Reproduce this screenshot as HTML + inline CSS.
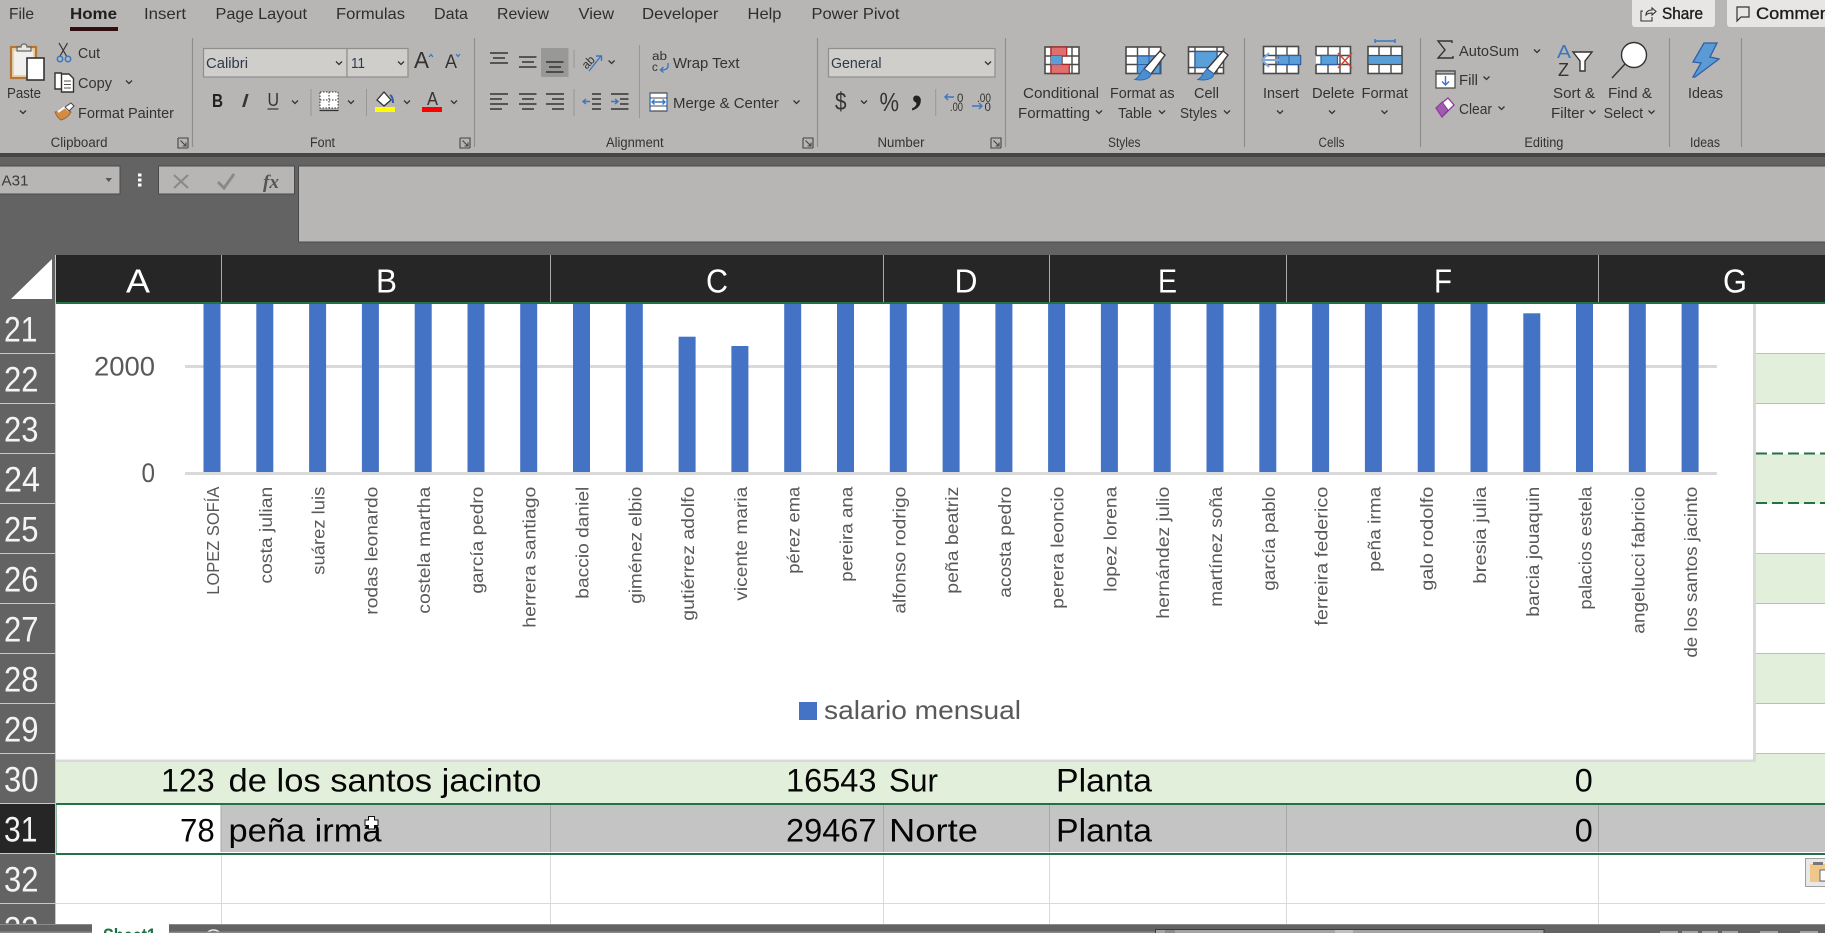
<!DOCTYPE html>
<html lang="en">
<head>
<meta charset="utf-8">
<title>Excel</title>
<style>
html,body{margin:0;padding:0;background:#636363;width:1825px;height:933px;overflow:hidden}
svg{display:block;position:absolute;left:0;top:0}
text{font-family:"Liberation Sans",sans-serif;white-space:pre}
.t{font-size:16px;fill:#2e2e2e}
.r{font-size:15px;fill:#333}
.g{font-size:13.5px;fill:#333}
.rn{font-size:35px;fill:#f4f4f4}
.cl{font-size:33px;fill:#fff;text-anchor:middle}
.d{font-size:32.5px;fill:#050505}
.x{font-size:17.5px;fill:#595959;text-anchor:end}
.y{font-size:26.5px;fill:#595959}
.ln{fill:none;stroke:#333;stroke-width:1.4}
.bl{fill:none;stroke:#3a76c4;stroke-width:1.4}
.gr{fill:#fff;stroke:#4a4a4a;stroke-width:1.6}
.gl{fill:none;stroke:#4a4a4a;stroke-width:1.4}
</style>
</head>
<body>
<svg width="1825" height="933" viewBox="0 0 1825 933" xmlns="http://www.w3.org/2000/svg">
<defs>
<path id="c" d="M-3-1.5 0 1.5 3-1.5" fill="none" stroke="#333" stroke-width="1.3"/>
<g id="lc"><path d="M0 0H10V10M0 0V10H10" fill="none" stroke="#444" stroke-width="1.1"/><path d="M2.5 2.5 8 8M8 4.5V8H4.5" fill="none" stroke="#444" stroke-width="1.1"/></g>
<g id="brush"><path d="M26-2 31 2 17 21 10 16Z" fill="#fff" stroke="#3a3a3a" stroke-width="1.4"/><path d="M10 16 17 21C16 26 9 28 1 26.500 6 24 6 19 10 16Z" fill="#4b8fd0" stroke="#2f6cb0" stroke-width="1"/></g>
<clipPath id="grid"><rect x="0" y="304" width="1825" height="620"/></clipPath>
<clipPath id="bot"><rect x="0" y="924" width="1825" height="9"/></clipPath>
</defs>

<!-- ribbon -->
<rect x="0" y="0" width="1825" height="153" fill="#b7b6b4"/>
<rect x="0" y="153" width="1825" height="4" fill="#454545"/>
<rect x="0" y="157" width="1825" height="98" fill="#636363"/>

<text class="t" x="9" y="19" textLength="25" lengthAdjust="spacingAndGlyphs">File</text>
<text class="t" x="70" y="19" textLength="47" lengthAdjust="spacingAndGlyphs" font-weight="bold" style="fill:#1f1f1f">Home</text>
<rect x="70" y="27" width="48" height="4" fill="#2f0f0f"/>
<text class="t" x="144" y="19" textLength="42" lengthAdjust="spacingAndGlyphs">Insert</text>
<text class="t" x="215.500" y="19" textLength="91.500" lengthAdjust="spacingAndGlyphs">Page Layout</text>
<text class="t" x="336" y="19" textLength="69" lengthAdjust="spacingAndGlyphs">Formulas</text>
<text class="t" x="434" y="19" textLength="34" lengthAdjust="spacingAndGlyphs">Data</text>
<text class="t" x="497" y="19" textLength="52" lengthAdjust="spacingAndGlyphs">Review</text>
<text class="t" x="578.500" y="19" textLength="35.500" lengthAdjust="spacingAndGlyphs">View</text>
<text class="t" x="642" y="19" textLength="76.500" lengthAdjust="spacingAndGlyphs">Developer</text>
<text class="t" x="747.500" y="19" textLength="34" lengthAdjust="spacingAndGlyphs">Help</text>
<text class="t" x="811.500" y="19" textLength="88" lengthAdjust="spacingAndGlyphs">Power Pivot</text>

<!-- share / comments -->
<rect x="1632" y="-4" width="83" height="31" rx="3" fill="#e7e6e4"/>
<rect x="1727" y="-4" width="110" height="31" rx="3" fill="#e7e6e4"/>
<path d="M1643 11H1641V21H1652V17M1646 15C1646 12 1648 10 1652 10V8L1656 11.500 1652 15V13C1649 13 1647 14 1646 15Z" fill="none" stroke="#333" stroke-width="1.1"/>
<text x="1662" y="19" font-size="17" fill="#1c1c1c" stroke="#1c1c1c" stroke-width=".35" textLength="41" lengthAdjust="spacingAndGlyphs">Share</text>
<path d="M1737 7H1749V17H1741L1737 21Z" fill="none" stroke="#333" stroke-width="1.2"/>
<text x="1756" y="19" font-size="17" fill="#1c1c1c" stroke="#1c1c1c" stroke-width=".35" textLength="88" lengthAdjust="spacingAndGlyphs">Comments</text>

<!-- group separators -->
<path d="M192.500 38V147M474.500 38V147M817.500 38V147M1005.500 38V147M1244.500 38V147M1420.500 38V147M1669.500 38V147M1741.500 38V147" stroke="#8f8e8c" stroke-width="1.2"/>
<path d="M311 89V116M366.500 89V116M574 50V68M574 89V116M639.500 45V118M935.700 89V116" stroke="#989795" stroke-width="1"/>

<!-- clipboard -->
<rect x="11" y="47" width="25" height="31" fill="#e9d3a8" stroke="#b4763a" stroke-width="2.200"/>
<rect x="14" y="51" width="19" height="24" fill="#f1f0ee"/>
<path d="M17 51V47H21C21 43 27 43 27 47H31V51Z" fill="#e7e6e4" stroke="#666" stroke-width="1.2"/>
<rect x="27" y="58" width="17" height="22" fill="#fff" stroke="#333" stroke-width="1.6"/>
<text class="r" x="7" y="98" textLength="34" lengthAdjust="spacingAndGlyphs">Paste</text>
<use href="#c" x="23" y="112"/>
<path d="M59 43 67 57M67.500 43 59.500 57" stroke="#333" stroke-width="1.2" fill="none"/>
<circle cx="60" cy="59" r="2.700" fill="none" stroke="#3a76c4" stroke-width="1.5"/><circle cx="68" cy="59" r="2.700" fill="none" stroke="#3a76c4" stroke-width="1.500"/>
<text class="r" x="78" y="58" textLength="22" lengthAdjust="spacingAndGlyphs">Cut</text>
<path d="M63 89H55V73H62" fill="#fff" stroke="#333" stroke-width="1.4"/>
<path d="M61.500 74H69L73.500 78.500V92H61.500Z" fill="#fff" stroke="#333" stroke-width="1.400"/>
<path d="M64 81H71M64 84.500H71M64 88H71" stroke="#555"/>
<text class="r" x="78" y="88" textLength="34" lengthAdjust="spacingAndGlyphs">Copy</text>
<use href="#c" x="129" y="82"/>
<path d="M55 112C60 112 63 110 65 107L71 112C69 116 65 119 61 120 58 118 56 115 55 112Z" fill="#d18b45" stroke="#a5642a"/>
<path d="M58 112 65 107 69 111" fill="none" stroke="#fff" stroke-width="2"/>
<path d="M65 107 71 103 74 106 69 111Z" fill="#fff" stroke="#444"/>
<text class="r" x="78" y="118" textLength="96" lengthAdjust="spacingAndGlyphs">Format Painter</text>
<text class="g" x="50.600" y="147" textLength="57" lengthAdjust="spacingAndGlyphs">Clipboard</text>
<use href="#lc" x="178" y="138"/>

<!-- font -->
<rect x="203.500" y="48.500" width="143.500" height="28.500" fill="#cfcecb" stroke="#8e8e8c" stroke-width="1.200"/>
<rect x="347" y="48.500" width="61" height="28.500" fill="#cfcecb" stroke="#8e8e8c" stroke-width="1.200"/>
<text class="r" x="206" y="68" textLength="42" lengthAdjust="spacingAndGlyphs" style="fill:#2c3a4c">Calibri</text>
<text class="r" x="351" y="68" textLength="14" lengthAdjust="spacingAndGlyphs" style="fill:#2c3a4c">11</text>
<use href="#c" x="339" y="63"/><use href="#c" x="401" y="63"/>
<text x="414" y="68" font-size="23" fill="#333" textLength="15" lengthAdjust="spacingAndGlyphs">A</text>
<path d="M429 57 431 54.500 433 57" fill="none" stroke="#3a76c4" stroke-width="1.200"/>
<text x="445" y="68" font-size="19" fill="#333" textLength="12" lengthAdjust="spacingAndGlyphs">A</text>
<path d="M456 54 458 56.500 460 54" fill="none" stroke="#3a76c4" stroke-width="1.200"/>
<text x="212" y="107" font-size="18" font-weight="bold" fill="#222" textLength="11" lengthAdjust="spacingAndGlyphs">B</text>
<text x="241" y="107" font-size="18" font-style="italic" fill="#333" textLength="8" lengthAdjust="spacingAndGlyphs">I</text>
<text x="267.500" y="106" font-size="18" fill="#333" textLength="11.500" lengthAdjust="spacingAndGlyphs">U</text>
<path d="M267.500 109H278.500" stroke="#333" stroke-width="1.200"/>
<use href="#c" x="295" y="102"/>
<rect x="320" y="92" width="18" height="16" fill="#fff" stroke="#333" stroke-width="1" stroke-dasharray="1.500 1.500"/>
<path d="M329 92V108M320 100H338" stroke="#333" stroke-width="1" stroke-dasharray="1.500 1.500"/>
<path d="M319.500 110.500H338.500" stroke="#333" stroke-width="1.300"/>
<use href="#c" x="351" y="102"/>
<path d="M377 100 384 92 391 100 384 106Z" fill="#fff" stroke="#333" stroke-width="1.300"/>
<path d="M390 95C392 96 393 99 393 103" fill="none" stroke="#2f5ea8" stroke-width="2"/>
<rect x="375" y="107" width="20" height="5" fill="#ffff00"/>
<use href="#c" x="407" y="102"/>
<text x="427" y="105" font-size="18" fill="#333" textLength="11" lengthAdjust="spacingAndGlyphs">A</text>
<rect x="422" y="107" width="20" height="5" fill="#ff0000"/>
<use href="#c" x="454" y="102"/>
<text class="g" x="310" y="147" textLength="25" lengthAdjust="spacingAndGlyphs">Font</text>
<use href="#lc" x="460" y="138"/>

<!-- alignment -->
<rect x="541" y="48" width="27.500" height="29" fill="#989896"/>
<path class="ln" d="M490 53H508M493 58H505M490 63H508M519 57H536.500M522 62H534M519 67H536.500M546 62H563.500M549 67H561M546 72H563.500"/>
<path class="ln" d="M490 94H508M490 99H502M490 104H508M490 109H502M519 94H536.500M522 99H534M519 104H536.500M522 109H534M546 94H564M552 99H564M546 104H564M552 109H564"/>
<text x="582" y="65" font-size="12" fill="#333" transform="rotate(-45 590 62)" textLength="13" lengthAdjust="spacingAndGlyphs">ab</text>
<path class="bl" d="M589 71 601 56M596 56H601.500V61"/>
<use href="#c" x="611.600" y="62"/>
<path class="ln" d="M592 94H601M592 109H601M592 99H601M592 104H601" />
<path class="bl" d="M590 101.500H583M586 99 583 101.500 586 104"/>
<path class="ln" d="M611 94H628.500M620 99H628.500M620 104H628.500M611 109H628.500"/>
<path class="bl" d="M611 101.500H618M615 99 618 101.500 615 104"/>
<text x="652" y="60" font-size="11.500" fill="#333" textLength="15" lengthAdjust="spacingAndGlyphs">ab</text>
<text x="652" y="71" font-size="11.500" fill="#333">c</text>
<path class="bl" d="M668 63V66C668 69 665 70 661 70M663.500 67 660.500 70 663.500 72.500"/>
<text class="r" x="673" y="68" textLength="66.500" lengthAdjust="spacingAndGlyphs">Wrap Text</text>
<rect x="650" y="93" width="17" height="18" fill="#fff" stroke="#4a4a4a" stroke-width="1.200"/>
<path d="M650 93V111M667 93V111" stroke="#3a76c4" stroke-width="1.200"/>
<path d="M650 98H667M650 106H667" stroke="#4a4a4a"/>
<path class="bl" d="M652 102H665M654.500 99.500 652 102 654.500 104.500M662.500 99.500 665 102 662.500 104.500"/>
<text class="r" x="673" y="108" textLength="105.700" lengthAdjust="spacingAndGlyphs">Merge &amp; Center</text>
<use href="#c" x="796.500" y="102"/>
<text class="g" x="606" y="147" textLength="57.600" lengthAdjust="spacingAndGlyphs">Alignment</text>
<use href="#lc" x="803" y="138"/>

<!-- number -->
<rect x="828.500" y="48.500" width="166.500" height="28.500" fill="#cfcecb" stroke="#8e8e8c" stroke-width="1.200"/>
<text class="r" x="831" y="68" textLength="50.500" lengthAdjust="spacingAndGlyphs" style="fill:#2c3a4c">General</text>
<use href="#c" x="988" y="63"/>
<text x="835" y="110" font-size="25" fill="#333" textLength="11.500" lengthAdjust="spacingAndGlyphs">$</text>
<use href="#c" x="864" y="102"/>
<text x="879.500" y="111" font-size="26" fill="#333" textLength="19.500" lengthAdjust="spacingAndGlyphs">%</text>
<text x="911.500" y="103" font-size="50" font-weight="bold" style="font-family:'Liberation Serif',serif" fill="#222" textLength="11" lengthAdjust="spacingAndGlyphs">,</text>
<path class="bl" d="M954 97H945M948 94 945 97 948 100"/>
<text x="957" y="102" font-size="11.500" fill="#333">0</text>
<text x="950" y="111" font-size="11.500" fill="#333" textLength="13" lengthAdjust="spacingAndGlyphs">.00</text>
<text x="977" y="102" font-size="11.500" fill="#333" textLength="14" lengthAdjust="spacingAndGlyphs">.00</text>
<path class="bl" d="M972 106H982M979 103 982 106 979 109"/>
<text x="984.500" y="111" font-size="11.500" fill="#333">0</text>
<text class="g" x="877.500" y="147" textLength="47" lengthAdjust="spacingAndGlyphs">Number</text>
<use href="#lc" x="991" y="138"/>

<!-- styles -->
<rect x="1045" y="47" width="34" height="26.500" class="gr"/>
<path class="gl" d="M1051 47V73.500M1062 47V73.500M1072 47V73.500M1045 56H1079M1045 64.500H1079"/>
<rect x="1051" y="47" width="15.700" height="9" fill="#e07070" stroke="#b22222" stroke-width="1.200"/>
<rect x="1051" y="64.500" width="18.300" height="9" fill="#e07070" stroke="#b22222" stroke-width="1.200"/>
<rect x="1051" y="56" width="10.700" height="8.500" fill="#5b9fd8"/>
<rect x="1126" y="47" width="34.700" height="26.500" class="gr"/>
<path class="gl" d="M1137.500 47V73.500M1149 47V73.500M1126 56H1160.700M1126 64.500H1160.700"/>
<rect x="1137.500" y="56" width="22.500" height="17.500" fill="#5b9fd8" stroke="#2f5ea8" stroke-width="1.200"/>
<path d="M1149 56V73.500M1137.500 64.500H1160" stroke="#2f5ea8" stroke-width="1"/>
<use href="#brush" x="1134" y="53"/>
<rect x="1188.500" y="47" width="35" height="26.500" class="gr"/>
<path class="gl" d="M1195 47V73.500M1217 47V73.500M1188.500 51.500H1223.500M1188.500 67.500H1223.500"/>
<rect x="1195" y="51.500" width="22" height="16" fill="#5b9fd8" stroke="#2f5ea8" stroke-width="1.200"/>
<use href="#brush" x="1197" y="53"/>
<text class="r" x="1023" y="98" textLength="76" lengthAdjust="spacingAndGlyphs">Conditional</text>
<text class="r" x="1018" y="118" textLength="72" lengthAdjust="spacingAndGlyphs">Formatting</text>
<use href="#c" x="1099" y="112"/>
<text class="r" x="1110" y="98" textLength="64.500" lengthAdjust="spacingAndGlyphs">Format as</text>
<text class="r" x="1118" y="118" textLength="34" lengthAdjust="spacingAndGlyphs">Table</text>
<use href="#c" x="1162" y="112"/>
<text class="r" x="1194" y="98" textLength="25" lengthAdjust="spacingAndGlyphs">Cell</text>
<text class="r" x="1180" y="118" textLength="37" lengthAdjust="spacingAndGlyphs">Styles</text>
<use href="#c" x="1227" y="112"/>
<text class="g" x="1108" y="147" textLength="32.500" lengthAdjust="spacingAndGlyphs">Styles</text>

<!-- cells -->
<rect x="1263.500" y="46.500" width="35" height="27" class="gr"/>
<path class="gl" d="M1276 46.500V73.500M1287 46.500V73.500M1263.500 55.500H1298.500M1263.500 64.500H1298.500"/>
<rect x="1278" y="55.500" width="22.700" height="9" fill="#5b9fd8" stroke="#2f5ea8" stroke-width="1.200"/>
<path d="M1289 55.500V64.500" stroke="#2f5ea8"/>
<path d="M1280 60H1263M1269 53 1262 60 1269 67" fill="none" stroke="#7fa8d8" stroke-width="2"/>
<path d="M1316 55.500V46.500H1350.500V73.500H1316V64.500" fill="#fff" stroke="#4a4a4a" stroke-width="1.600"/>
<path class="gl" d="M1328 46.500V55M1340 46.500V73.500M1328 64.500V73.500M1316 55.500H1350.500M1316 64.500H1350.500"/>
<rect x="1321" y="55.500" width="16.500" height="9" fill="#5b9fd8" stroke="#2f5ea8" stroke-width="1.200"/>
<path d="M1338 53 1352 68M1352 53 1338 68" stroke="#d8432f" stroke-width="1.500"/>
<rect x="1368" y="46.500" width="34" height="27" class="gr"/>
<path class="gl" d="M1379 46.500V73.500M1391 46.500V73.500"/>
<rect x="1368" y="55.500" width="34" height="9" fill="#5b9fd8" stroke="#4a4a4a" stroke-width="1.200"/>
<path d="M1375 41H1395M1375 39V43M1395 39V43" stroke="#3a76c4" stroke-width="1.400"/>
<text class="r" x="1263" y="98" textLength="36" lengthAdjust="spacingAndGlyphs">Insert</text>
<text class="r" x="1312" y="98" textLength="42.500" lengthAdjust="spacingAndGlyphs">Delete</text>
<text class="r" x="1361.500" y="98" textLength="46.500" lengthAdjust="spacingAndGlyphs">Format</text>
<use href="#c" x="1280" y="112"/><use href="#c" x="1332" y="112"/><use href="#c" x="1384.500" y="112"/>
<text class="g" x="1318.500" y="147" textLength="26" lengthAdjust="spacingAndGlyphs">Cells</text>

<!-- editing -->
<path d="M1452 43V41H1438L1445 50 1438 58H1453V56" fill="none" stroke="#333" stroke-width="1.400"/>
<text class="r" x="1459" y="56" textLength="60" lengthAdjust="spacingAndGlyphs">AutoSum</text>
<use href="#c" x="1537" y="51"/>
<rect x="1436" y="71" width="19" height="17" fill="#fff" stroke="#444" stroke-width="1.200"/>
<rect x="1436" y="71" width="19" height="3" fill="#b7b6b4" stroke="#444" stroke-width="1.200"/>
<path class="bl" d="M1445.500 76V85M1442 81.500 1445.500 85 1449 81.500"/>
<text class="r" x="1459" y="85" textLength="19" lengthAdjust="spacingAndGlyphs">Fill</text>
<use href="#c" x="1486.500" y="78"/>
<path d="M1436 108 1448 98 1454 105 1442 117Z" fill="#fff" stroke="#8a3a9a" stroke-width="1.300"/>
<path d="M1436 108 1442 102 1448 110 1442 117Z" fill="#a05cb0" stroke="#8a3a9a"/>
<text class="r" x="1459" y="114" textLength="33" lengthAdjust="spacingAndGlyphs">Clear</text>
<use href="#c" x="1501.500" y="108"/>
<text x="1557" y="58" font-size="18" fill="#3a76c4" textLength="14" lengthAdjust="spacingAndGlyphs">A</text>
<text x="1558" y="76" font-size="18" fill="#333" textLength="11" lengthAdjust="spacingAndGlyphs">Z</text>
<path d="M1573 52H1592L1585 61V71H1580V61Z" fill="#fff" stroke="#333" stroke-width="1.400"/>
<circle cx="1634" cy="55" r="12.500" fill="#fff" stroke="#333" stroke-width="1.400"/>
<path d="M1625 64 1612 78" stroke="#333" stroke-width="1.400"/>
<text class="r" x="1553" y="98" textLength="42" lengthAdjust="spacingAndGlyphs">Sort &amp;</text>
<text class="r" x="1551" y="118" textLength="33.600" lengthAdjust="spacingAndGlyphs">Filter</text>
<use href="#c" x="1592.500" y="112"/>
<text class="r" x="1608" y="98" textLength="44" lengthAdjust="spacingAndGlyphs">Find &amp;</text>
<text class="r" x="1603.600" y="118" textLength="39.500" lengthAdjust="spacingAndGlyphs">Select</text>
<use href="#c" x="1651.500" y="112"/>
<text class="g" x="1524.400" y="147" textLength="39" lengthAdjust="spacingAndGlyphs">Editing</text>

<!-- ideas -->
<path d="M1704 43H1717L1710 57 1719 59 1695 77H1693L1701 63 1693 62Z" fill="#5b9bd5" stroke="#2f5ea8" stroke-width="1.300"/>
<text class="r" x="1688" y="98" textLength="35" lengthAdjust="spacingAndGlyphs">Ideas</text>
<text class="g" x="1690" y="147" textLength="30" lengthAdjust="spacingAndGlyphs">Ideas</text>

<!-- formula bar -->
<rect x="-2" y="166" width="122" height="28" fill="#b7b6b4" stroke="#4a4a4a"/>
<text x="1.500" y="185.700" font-size="14.500" fill="#3a3a3a" textLength="27" lengthAdjust="spacingAndGlyphs">A31</text>
<path d="M105.500 178H112L108.700 182Z" fill="#555"/>
<rect x="138" y="173.500" width="3.500" height="3" fill="#fff"/><rect x="138" y="178.500" width="3.500" height="3" fill="#fff"/><rect x="138" y="183.500" width="3.500" height="3" fill="#fff"/>
<rect x="158.500" y="166" width="136" height="28" fill="#b7b6b4" stroke="#4a4a4a"/>
<path d="M174 175 188 188M188 175 174 188" stroke="#8a8a88" stroke-width="2.200"/>
<path d="M218 182 224 188 234 174" fill="none" stroke="#8a8a88" stroke-width="3"/>
<text x="263" y="188" font-size="19" font-weight="bold" font-style="italic" style="font-family:'Liberation Serif',serif" fill="#555" textLength="16" lengthAdjust="spacingAndGlyphs">fx</text>
<rect x="298.500" y="166" width="1530" height="76" fill="#b7b6b4" stroke="#4a4a4a"/>

<!-- corner + column headers -->
<rect x="0" y="255" width="55" height="49" fill="#636363"/>
<path d="M52 259V299H11Z" fill="#fff"/>
<rect x="56" y="255" width="1769" height="47" fill="#262626"/>
<path d="M221.500 255V302M550.500 255V302M883.500 255V302M1049.500 255V302M1286.500 255V302M1598.500 255V302" stroke="#a8a8a8" stroke-width="1"/>
<text class="cl" x="138" y="292.700" textLength="24" lengthAdjust="spacingAndGlyphs">A</text>
<text class="cl" x="386.500" y="292.700" textLength="21" lengthAdjust="spacingAndGlyphs">B</text>
<text class="cl" x="717" y="292.700" textLength="22" lengthAdjust="spacingAndGlyphs">C</text>
<text class="cl" x="966" y="292.700" textLength="23" lengthAdjust="spacingAndGlyphs">D</text>
<text class="cl" x="1167.500" y="292.700" textLength="19" lengthAdjust="spacingAndGlyphs">E</text>
<text class="cl" x="1443" y="292.700" textLength="18" lengthAdjust="spacingAndGlyphs">F</text>
<text class="cl" x="1735" y="292.700" textLength="24" lengthAdjust="spacingAndGlyphs">G</text>
<rect x="55" y="302" width="1770" height="2" fill="#217346"/>

<!-- sheet background -->
<rect x="56" y="304" width="1769" height="620" fill="#fff"/>
<!-- right-side banded rows -->
<g fill="#e2efda">
<rect x="1756" y="354" width="69" height="50"/>
<rect x="1756" y="454" width="69" height="50"/>
<rect x="1756" y="554" width="69" height="50"/>
<rect x="1756" y="654" width="69" height="50"/>
</g>
<path d="M1756 353.500H1825M1756 403.500H1825M1756 553.500H1825M1756 603.500H1825M1756 653.500H1825M1756 703.500H1825" stroke="#a9d08e" stroke-width="1"/>
<path d="M1756 453.500H1825M1756 503H1825" stroke="#217346" stroke-width="2" stroke-dasharray="11 5"/>

<!-- row 30/31 -->
<rect x="56" y="754" width="1769" height="49" fill="#e2efda"/>
<path d="M1756 753.500H1825" stroke="#a9d08e" stroke-width="1"/>
<rect x="221" y="805" width="1604" height="47" fill="#c4c4c4"/>
<path d="M550.500 805V852M883.500 805V852M1049.500 805V852M1286.500 805V852M1598.500 805V852" stroke="#a8a8a8" stroke-width="1"/>
<path d="M221 805V852" stroke="#a8a8a8"/>
<rect x="55" y="803" width="1770" height="2" fill="#217346"/>
<rect x="55" y="853" width="1770" height="2" fill="#217346"/>
<rect x="55" y="803" width="1.500" height="52" fill="#217346"/>
<path d="M221.500 855V924M550.500 855V924M883.500 855V924M1049.500 855V924M1286.500 855V924M1598.500 855V924M56 903.500H1825" stroke="#d9d9d9" stroke-width="1"/>

<!-- row header -->
<rect x="0" y="304" width="55" height="620" fill="#636363"/>
<rect x="0" y="804" width="55" height="50" fill="#262626"/>
<rect x="55" y="255" width="1" height="669" fill="#c8c8c8"/>
<path d="M0 353.500H55M0 403.500H55M0 453.500H55M0 503.500H55M0 553.500H55M0 603.500H55M0 653.500H55M0 703.500H55M0 753.500H55M0 803.500H55M0 853.500H55M0 903.500H55" stroke="#c8c8c8" stroke-width="1"/>
<g clip-path="url(#grid)">
<text class="rn" x="4" y="341.700" textLength="33.500" lengthAdjust="spacingAndGlyphs">21</text>
<text class="rn" x="4" y="391.700" textLength="34.500" lengthAdjust="spacingAndGlyphs">22</text>
<text class="rn" x="4" y="441.700" textLength="34.500" lengthAdjust="spacingAndGlyphs">23</text>
<text class="rn" x="4" y="491.700" textLength="36" lengthAdjust="spacingAndGlyphs">24</text>
<text class="rn" x="4" y="541.700" textLength="34.500" lengthAdjust="spacingAndGlyphs">25</text>
<text class="rn" x="4" y="591.700" textLength="34.500" lengthAdjust="spacingAndGlyphs">26</text>
<text class="rn" x="4" y="641.700" textLength="34.500" lengthAdjust="spacingAndGlyphs">27</text>
<text class="rn" x="4" y="691.700" textLength="34.500" lengthAdjust="spacingAndGlyphs">28</text>
<text class="rn" x="4" y="741.700" textLength="34.500" lengthAdjust="spacingAndGlyphs">29</text>
<text class="rn" x="4" y="791.700" textLength="34.500" lengthAdjust="spacingAndGlyphs">30</text>
<text class="rn" x="4" y="841.700" textLength="33.500" lengthAdjust="spacingAndGlyphs">31</text>
<text class="rn" x="4" y="891.700" textLength="34.500" lengthAdjust="spacingAndGlyphs">32</text>
<text class="rn" x="4" y="941.700" textLength="34.500" lengthAdjust="spacingAndGlyphs">33</text>
</g>

<!-- chart -->
<rect x="56" y="304" width="1697" height="455.500" fill="#fff"/>
<rect x="1753" y="304" width="3" height="458" fill="#d9d9d9"/>
<rect x="56" y="759.500" width="1700" height="2.500" fill="#d9d9d9"/>
<rect x="185" y="365" width="1532" height="3" fill="#d9d9d9"/>
<rect x="185" y="472" width="1532" height="3" fill="#d9d9d9"/>
<text class="y" x="94" y="375.700" textLength="61" lengthAdjust="spacingAndGlyphs">2000</text>
<text class="y" x="141.500" y="482" textLength="13.500" lengthAdjust="spacingAndGlyphs">0</text>
<g fill="#4472c4">
<rect x="203.500" y="304" width="17" height="168"/>
<rect x="256.300" y="304" width="17" height="168"/>
<rect x="309.100" y="304" width="17" height="168"/>
<rect x="361.900" y="304" width="17" height="168"/>
<rect x="414.700" y="304" width="17" height="168"/>
<rect x="467.500" y="304" width="17" height="168"/>
<rect x="520.200" y="304" width="17" height="168"/>
<rect x="573" y="304" width="17" height="168"/>
<rect x="625.800" y="304" width="17" height="168"/>
<rect x="678.600" y="336.700" width="17" height="135.300"/>
<rect x="731.400" y="346" width="17" height="126"/>
<rect x="784.200" y="304" width="17" height="168"/>
<rect x="837" y="304" width="17" height="168"/>
<rect x="889.800" y="304" width="17" height="168"/>
<rect x="942.600" y="304" width="17" height="168"/>
<rect x="995.400" y="304" width="17" height="168"/>
<rect x="1048.100" y="304" width="17" height="168"/>
<rect x="1100.900" y="304" width="17" height="168"/>
<rect x="1153.700" y="304" width="17" height="168"/>
<rect x="1206.500" y="304" width="17" height="168"/>
<rect x="1259.300" y="304" width="17" height="168"/>
<rect x="1312.100" y="304" width="17" height="168"/>
<rect x="1364.900" y="304" width="17" height="168"/>
<rect x="1417.700" y="304" width="17" height="168"/>
<rect x="1470.500" y="304" width="17" height="168"/>
<rect x="1523.300" y="313.300" width="17" height="158.700"/>
<rect x="1576" y="304" width="17" height="168"/>
<rect x="1628.800" y="304" width="17" height="168"/>
<rect x="1681.600" y="304" width="17" height="168"/>
</g>
<g>
<text class="x" transform="translate(219,486.700) rotate(-90)" textLength="108" lengthAdjust="spacingAndGlyphs">LOPEZ SOFÍA</text>
<text class="x" transform="translate(271.800,486.700) rotate(-90)" textLength="97" lengthAdjust="spacingAndGlyphs">costa julian</text>
<text class="x" transform="translate(324.600,486.700) rotate(-90)" textLength="88" lengthAdjust="spacingAndGlyphs">suárez luis</text>
<text class="x" transform="translate(377.400,486.700) rotate(-90)" textLength="128" lengthAdjust="spacingAndGlyphs">rodas leonardo</text>
<text class="x" transform="translate(430.200,486.700) rotate(-90)" textLength="127" lengthAdjust="spacingAndGlyphs">costela martha</text>
<text class="x" transform="translate(483,486.700) rotate(-90)" textLength="107" lengthAdjust="spacingAndGlyphs">garcía pedro</text>
<text class="x" transform="translate(535.700,486.700) rotate(-90)" textLength="141" lengthAdjust="spacingAndGlyphs">herrera santiago</text>
<text class="x" transform="translate(588.500,486.700) rotate(-90)" textLength="112" lengthAdjust="spacingAndGlyphs">baccio daniel</text>
<text class="x" transform="translate(641.300,486.700) rotate(-90)" textLength="117" lengthAdjust="spacingAndGlyphs">giménez elbio</text>
<text class="x" transform="translate(694.100,486.700) rotate(-90)" textLength="134" lengthAdjust="spacingAndGlyphs">gutiérrez adolfo</text>
<text class="x" transform="translate(746.900,486.700) rotate(-90)" textLength="114" lengthAdjust="spacingAndGlyphs">vicente maria</text>
<text class="x" transform="translate(799.700,486.700) rotate(-90)" textLength="87" lengthAdjust="spacingAndGlyphs">pérez ema</text>
<text class="x" transform="translate(852.500,486.700) rotate(-90)" textLength="95" lengthAdjust="spacingAndGlyphs">pereira ana</text>
<text class="x" transform="translate(905.300,486.700) rotate(-90)" textLength="127" lengthAdjust="spacingAndGlyphs">alfonso rodrigo</text>
<text class="x" transform="translate(958.100,486.700) rotate(-90)" textLength="107" lengthAdjust="spacingAndGlyphs">peña beatriz</text>
<text class="x" transform="translate(1010.900,486.700) rotate(-90)" textLength="111" lengthAdjust="spacingAndGlyphs">acosta pedro</text>
<text class="x" transform="translate(1063.600,486.700) rotate(-90)" textLength="122" lengthAdjust="spacingAndGlyphs">perera leoncio</text>
<text class="x" transform="translate(1116.400,486.700) rotate(-90)" textLength="105" lengthAdjust="spacingAndGlyphs">lopez lorena</text>
<text class="x" transform="translate(1169.200,486.700) rotate(-90)" textLength="132" lengthAdjust="spacingAndGlyphs">hernández julio</text>
<text class="x" transform="translate(1222,486.700) rotate(-90)" textLength="120" lengthAdjust="spacingAndGlyphs">martínez soña</text>
<text class="x" transform="translate(1274.800,486.700) rotate(-90)" textLength="104" lengthAdjust="spacingAndGlyphs">garcía pablo</text>
<text class="x" transform="translate(1327.600,486.700) rotate(-90)" textLength="139" lengthAdjust="spacingAndGlyphs">ferreira federico</text>
<text class="x" transform="translate(1380.400,486.700) rotate(-90)" textLength="85" lengthAdjust="spacingAndGlyphs">peña irma</text>
<text class="x" transform="translate(1433.200,486.700) rotate(-90)" textLength="104" lengthAdjust="spacingAndGlyphs">galo rodolfo</text>
<text class="x" transform="translate(1486,486.700) rotate(-90)" textLength="97" lengthAdjust="spacingAndGlyphs">bresia julia</text>
<text class="x" transform="translate(1538.800,486.700) rotate(-90)" textLength="130" lengthAdjust="spacingAndGlyphs">barcia jouaquin</text>
<text class="x" transform="translate(1591.500,486.700) rotate(-90)" textLength="123" lengthAdjust="spacingAndGlyphs">palacios estela</text>
<text class="x" transform="translate(1644.300,486.700) rotate(-90)" textLength="147" lengthAdjust="spacingAndGlyphs">angelucci fabricio</text>
<text class="x" transform="translate(1697.100,486.700) rotate(-90)" textLength="171" lengthAdjust="spacingAndGlyphs">de los santos jacinto</text>
</g>
<rect x="799" y="702" width="18" height="18" fill="#4472c4"/>
<text x="824" y="719" font-size="26" fill="#595959" textLength="197" lengthAdjust="spacingAndGlyphs">salario mensual</text>

<!-- data -->
<text class="d" x="161" y="791.700" textLength="53.700" lengthAdjust="spacingAndGlyphs">123</text>
<text class="d" x="228.500" y="791.700" textLength="313" lengthAdjust="spacingAndGlyphs">de los santos jacinto</text>
<text class="d" x="786" y="791.700" textLength="90.500" lengthAdjust="spacingAndGlyphs">16543</text>
<text class="d" x="889" y="791.700" textLength="49" lengthAdjust="spacingAndGlyphs">Sur</text>
<text class="d" x="1056" y="791.700" textLength="96" lengthAdjust="spacingAndGlyphs">Planta</text>
<text class="d" x="1574.700" y="791.700" textLength="18" lengthAdjust="spacingAndGlyphs">0</text>
<text class="d" x="180" y="841.700" textLength="34.700" lengthAdjust="spacingAndGlyphs">78</text>
<text class="d" x="228.500" y="841.700" textLength="153" lengthAdjust="spacingAndGlyphs">peña irma</text>
<text class="d" x="786" y="841.700" textLength="90.500" lengthAdjust="spacingAndGlyphs">29467</text>
<text class="d" x="889" y="841.700" textLength="89" lengthAdjust="spacingAndGlyphs">Norte</text>
<text class="d" x="1056" y="841.700" textLength="96" lengthAdjust="spacingAndGlyphs">Planta</text>
<text class="d" x="1574.700" y="841.700" textLength="18" lengthAdjust="spacingAndGlyphs">0</text>
<!-- cursor -->
<path d="M368.500 816.500H374.500V820H378V825.500H374.500V829H368.500V825.500H365V820H368.500Z" fill="#fff" stroke="#111" stroke-width="1"/>

<!-- paste options -->
<rect x="1805.500" y="858.500" width="22" height="28" fill="#e8e8e8" stroke="#a0a0a0"/>
<rect x="1810" y="864" width="15" height="18" fill="#f0c78a"/>
<rect x="1813" y="862" width="10" height="3" fill="#777"/>
<rect x="1820" y="870" width="8" height="11" fill="#fff" stroke="#666"/>

<!-- bottom bar -->
<rect x="0" y="924" width="1825" height="9" fill="#636363"/>
<rect x="0" y="924" width="1825" height="1" fill="#8a8a8a"/>
<rect x="92" y="924" width="77" height="9" fill="#fff"/>
<g clip-path="url(#bot)">
<text x="103" y="942" font-size="19" font-weight="bold" fill="#217346" textLength="53" lengthAdjust="spacingAndGlyphs">Sheet1</text>
<circle cx="213.500" cy="939" r="9" fill="none" stroke="#e8e8e8" stroke-width="1.500"/>
</g>
<rect x="0" y="931.500" width="92" height="1.500" fill="#8a8a8a"/>
<rect x="169" y="931.500" width="986" height="1.500" fill="#8a8a8a"/>
<rect x="1155.500" y="929.500" width="388.500" height="5" fill="#a4a4a4" stroke="#3a3a3a"/>
<rect x="1165" y="930" width="10" height="3" fill="#8a8a8a"/>
<rect x="1335" y="930" width="18" height="3" fill="#c0c0c0"/>
<g fill="#a4a4a4"><rect x="1660" y="931" width="18" height="2"/><rect x="1682" y="931" width="16" height="2"/><rect x="1702" y="931" width="16" height="2"/><rect x="1722" y="931" width="16" height="2"/><rect x="1760" y="931" width="18" height="2"/><rect x="1800" y="931" width="18" height="2"/></g>
</svg>
</body>
</html>
